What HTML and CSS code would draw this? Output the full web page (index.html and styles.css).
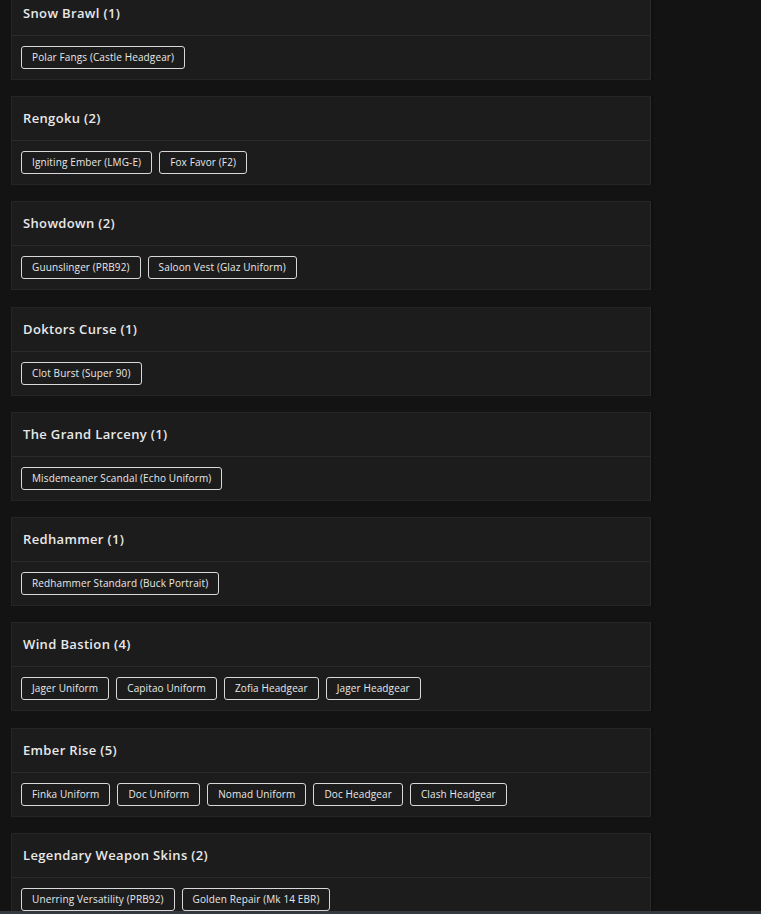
FILE: index.html
```html
<!DOCTYPE html>
<html>
<head>
    <meta charset="utf-8">
    <meta name="viewport" content="width=device-width, initial-scale=1.0">
    <title>Event Rewards</title>
    <link rel="stylesheet" href="styles.css">
</head>
<body>
    <div class="events">
        <div class="event">
            <div class="event-title">Snow Brawl (1)</div>
            <div class="event-items">
                <span class="item">Polar Fangs (Castle Headgear)</span>
            </div>
        </div>
        <div class="event">
            <div class="event-title">Rengoku (2)</div>
            <div class="event-items">
                <span class="item">Igniting Ember (LMG-E)</span>
                <span class="item">Fox Favor (F2)</span>
            </div>
        </div>
        <div class="event">
            <div class="event-title">Showdown (2)</div>
            <div class="event-items">
                <span class="item">Guunslinger (PRB92)</span>
                <span class="item">Saloon Vest (Glaz Uniform)</span>
            </div>
        </div>
        <div class="event">
            <div class="event-title">Doktors Curse (1)</div>
            <div class="event-items">
                <span class="item">Clot Burst (Super 90)</span>
            </div>
        </div>
        <div class="event">
            <div class="event-title">The Grand Larceny (1)</div>
            <div class="event-items">
                <span class="item">Misdemeaner Scandal (Echo Uniform)</span>
            </div>
        </div>
        <div class="event">
            <div class="event-title">Redhammer (1)</div>
            <div class="event-items">
                <span class="item">Redhammer Standard (Buck Portrait)</span>
            </div>
        </div>
        <div class="event">
            <div class="event-title">Wind Bastion (4)</div>
            <div class="event-items">
                <span class="item">Jager Uniform</span>
                <span class="item">Capitao Uniform</span>
                <span class="item">Zofia Headgear</span>
                <span class="item">Jager Headgear</span>
            </div>
        </div>
        <div class="event">
            <div class="event-title">Ember Rise (5)</div>
            <div class="event-items">
                <span class="item">Finka Uniform</span>
                <span class="item">Doc Uniform</span>
                <span class="item">Nomad Uniform</span>
                <span class="item">Doc Headgear</span>
                <span class="item">Clash Headgear</span>
            </div>
        </div>
        <div class="event">
            <div class="event-title">Legendary Weapon Skins (2)</div>
            <div class="event-items">
                <span class="item">Unerring Versatility (PRB92)</span>
                <span class="item">Golden Repair (Mk 14 EBR)</span>
            </div>
        </div>
    </div>
    <div class="bottom-edge"></div>
</body>
</html>
```

FILE: styles.css
```css
html, body {
    margin: 0;
    background-color: #131313;
    font-family: "Open Sans", "Noto Sans", sans-serif;
    color: #e6e6e6;
    overflow: hidden;
    height: 914px;
}
.events {
    width: 640px;
    margin-left: 11px;
    margin-top: -9.3px;
}
.event {
    background-color: #1c1c1c;
    border: 1px solid #252525;
    border-right-color: #2c2c2c;
    box-shadow: 2px 0 0 #0f0f0f;
    margin-bottom: 16.3px;
}
.event-title {
    height: 43px;
    line-height: 43px;
    padding: 0 11px;
    font-size: 13px;
    font-weight: 600;
    letter-spacing: 0.35px;
    color: #e8e8e8;
    border-bottom: 1px solid #2a2a2a;
}
.event-items {
    display: flex;
    flex-wrap: wrap;
    gap: 7px;
    padding: 10px 9px;
}
.item {
    display: inline-block;
    height: 21px;
    line-height: 21px;
    padding: 0 10px;
    font-size: 10px;
    letter-spacing: 0.12px;
    color: #e8e8e8;
    border: 1px solid #d8d8d8;
    border-radius: 3px;
}
.bottom-edge {
    position: fixed;
    left: 0;
    right: 0;
    bottom: 0;
    height: 3px;
    background-color: #353a3f;
}
```
